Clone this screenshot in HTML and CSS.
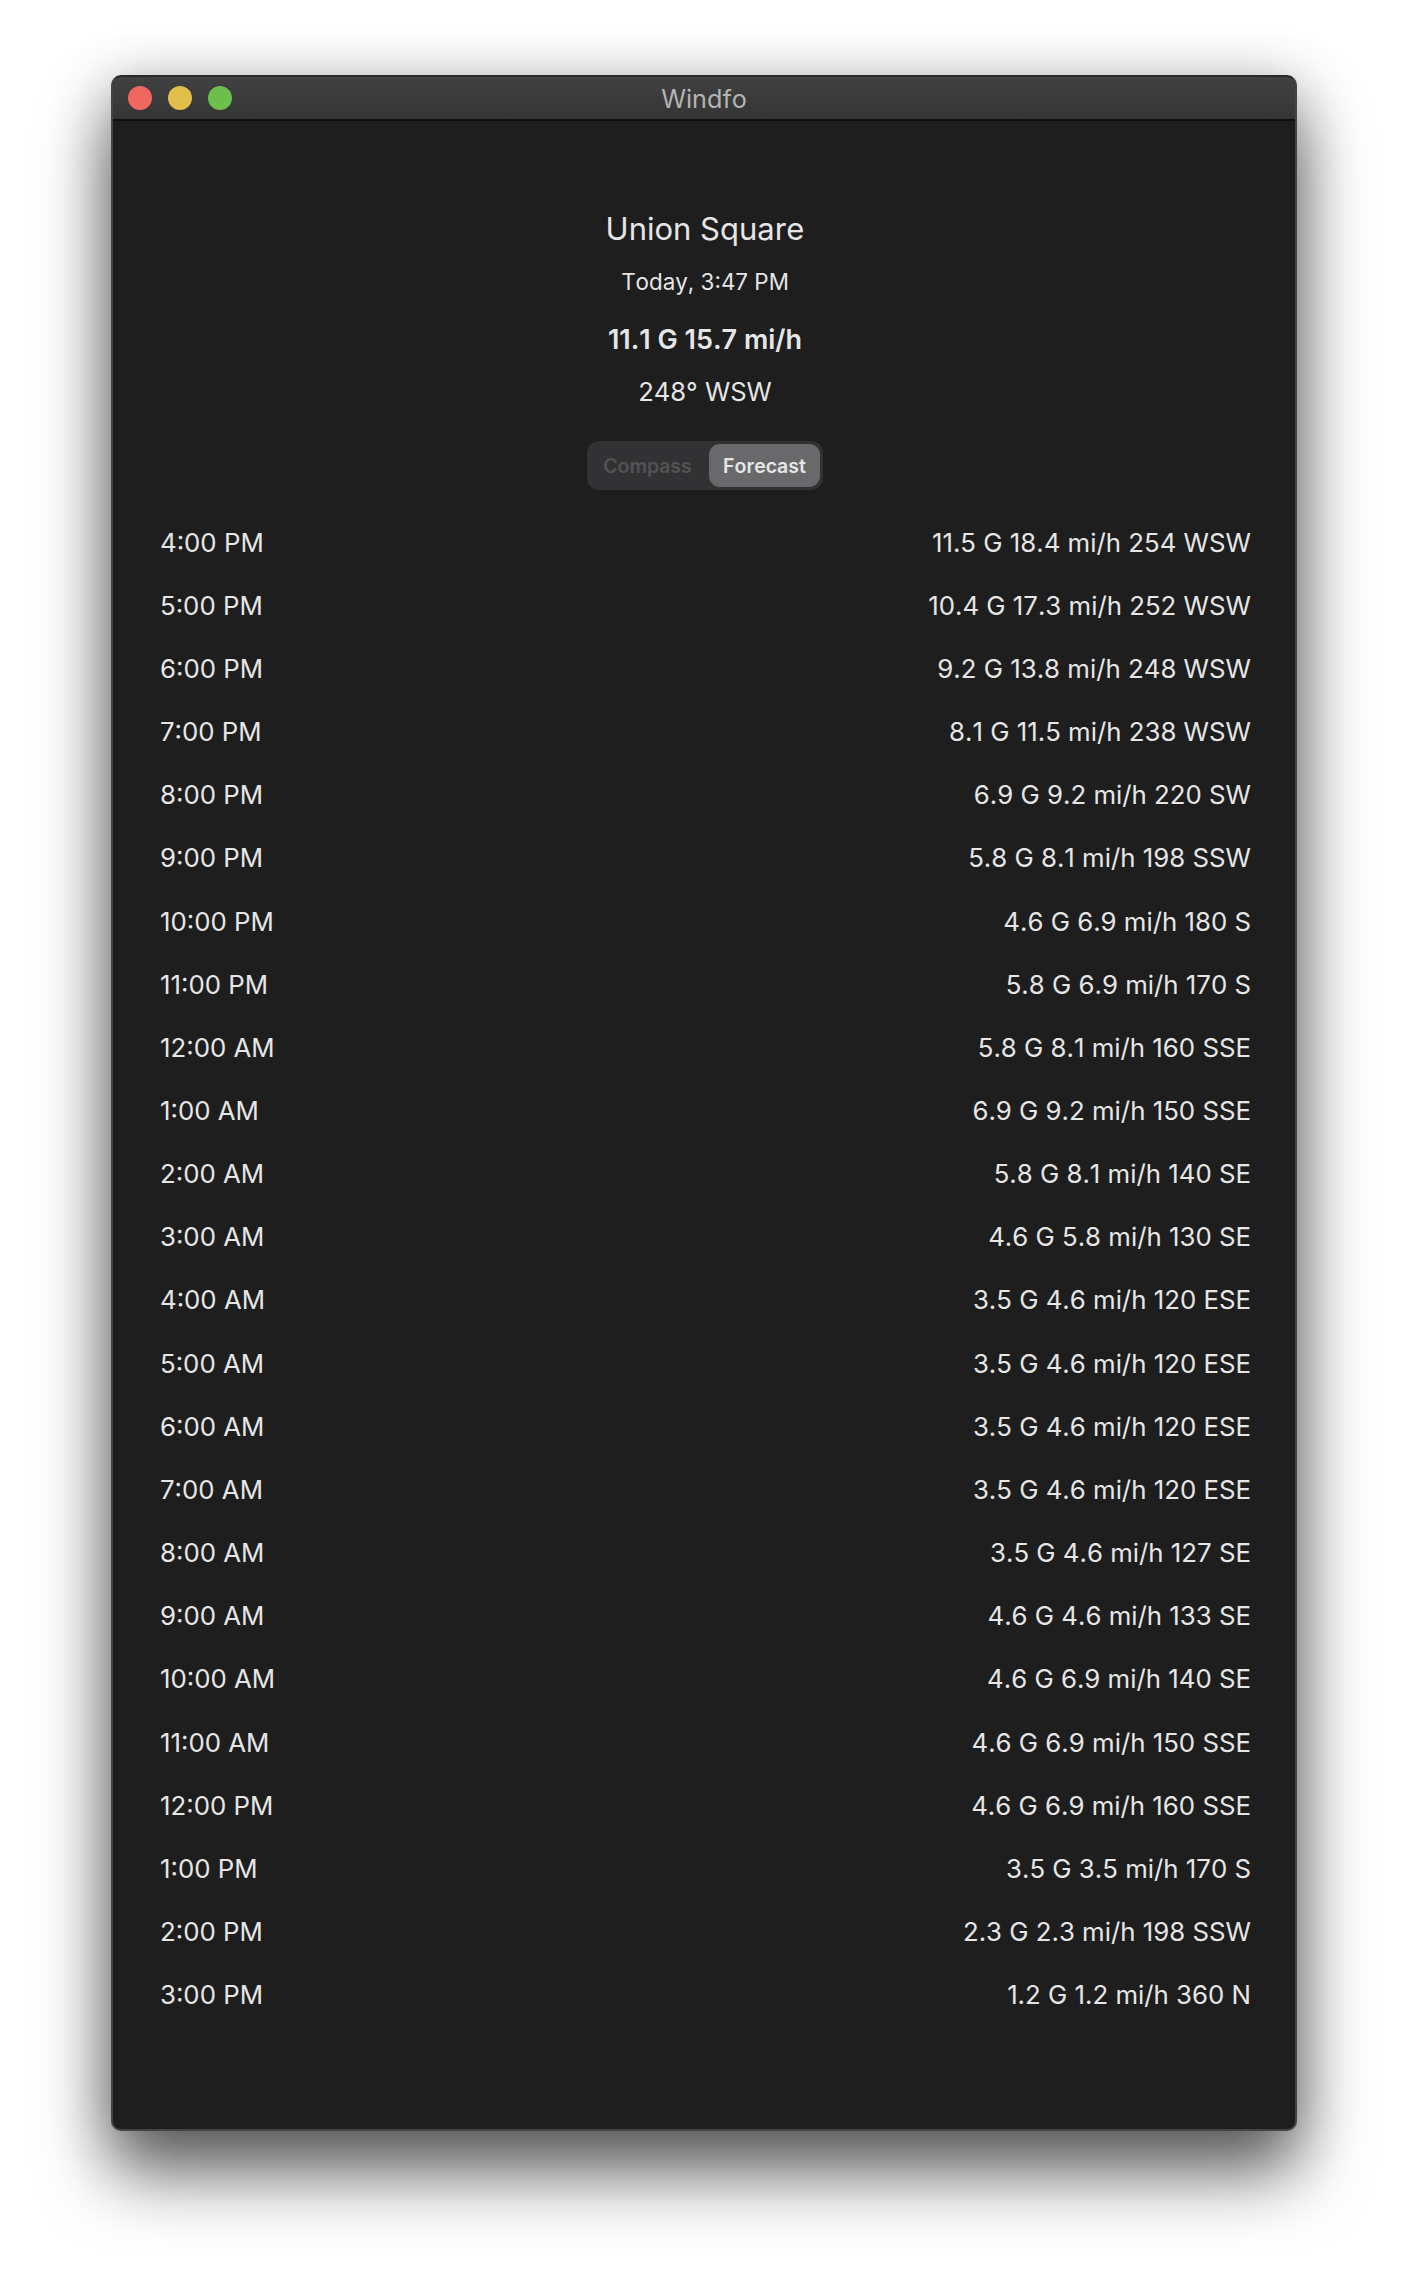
FILE: index.html
```html
<!DOCTYPE html>
<html lang="en">
<head>
<meta charset="utf-8">
<title>Windfo</title>
<link rel="stylesheet" href="styles.css">
</head>
<body>
<div class="window">
  <header class="titlebar">
    <div class="lights">
      <span class="light red"></span>
      <span class="light yellow"></span>
      <span class="light green"></span>
    </div>
    <div class="title">Windfo</div>
  </header>
  <main class="content">
    <section class="summary">
      <h1 class="station">Union Square</h1>
      <div class="updated">Today, 3:47 PM</div>
      <div class="speed">11.1 G 15.7 mi/h</div>
      <div class="direction">248° WSW</div>
      <div class="segmented">
        <span class="segment">Compass</span>
        <span class="segment active">Forecast</span>
      </div>
    </section>
    <ul class="forecast">
      <li class="row"><span>4:00 PM</span><span>11.5 G 18.4 mi/h 254 WSW</span></li>
      <li class="row"><span>5:00 PM</span><span>10.4 G 17.3 mi/h 252 WSW</span></li>
      <li class="row"><span>6:00 PM</span><span>9.2 G 13.8 mi/h 248 WSW</span></li>
      <li class="row"><span>7:00 PM</span><span>8.1 G 11.5 mi/h 238 WSW</span></li>
      <li class="row"><span>8:00 PM</span><span>6.9 G 9.2 mi/h 220 SW</span></li>
      <li class="row"><span>9:00 PM</span><span>5.8 G 8.1 mi/h 198 SSW</span></li>
      <li class="row"><span>10:00 PM</span><span>4.6 G 6.9 mi/h 180 S</span></li>
      <li class="row"><span>11:00 PM</span><span>5.8 G 6.9 mi/h 170 S</span></li>
      <li class="row"><span>12:00 AM</span><span>5.8 G 8.1 mi/h 160 SSE</span></li>
      <li class="row"><span>1:00 AM</span><span>6.9 G 9.2 mi/h 150 SSE</span></li>
      <li class="row"><span>2:00 AM</span><span>5.8 G 8.1 mi/h 140 SE</span></li>
      <li class="row"><span>3:00 AM</span><span>4.6 G 5.8 mi/h 130 SE</span></li>
      <li class="row"><span>4:00 AM</span><span>3.5 G 4.6 mi/h 120 ESE</span></li>
      <li class="row"><span>5:00 AM</span><span>3.5 G 4.6 mi/h 120 ESE</span></li>
      <li class="row"><span>6:00 AM</span><span>3.5 G 4.6 mi/h 120 ESE</span></li>
      <li class="row"><span>7:00 AM</span><span>3.5 G 4.6 mi/h 120 ESE</span></li>
      <li class="row"><span>8:00 AM</span><span>3.5 G 4.6 mi/h 127 SE</span></li>
      <li class="row"><span>9:00 AM</span><span>4.6 G 4.6 mi/h 133 SE</span></li>
      <li class="row"><span>10:00 AM</span><span>4.6 G 6.9 mi/h 140 SE</span></li>
      <li class="row"><span>11:00 AM</span><span>4.6 G 6.9 mi/h 150 SSE</span></li>
      <li class="row"><span>12:00 PM</span><span>4.6 G 6.9 mi/h 160 SSE</span></li>
      <li class="row"><span>1:00 PM</span><span>3.5 G 3.5 mi/h 170 S</span></li>
      <li class="row"><span>2:00 PM</span><span>2.3 G 2.3 mi/h 198 SSW</span></li>
      <li class="row"><span>3:00 PM</span><span>1.2 G 1.2 mi/h 360 N</span></li>
    </ul>
  </main>
</div>
</body>
</html>
```

FILE: styles.css
```css
* { box-sizing: border-box; }
html, body { margin: 0; height: 2278px; overflow: hidden; background: #fff; }
body {
  padding: 75px 111px 0 111px;
  font-family: Inter, "Liberation Sans", sans-serif;
  font-kerning: none;
  color: #e6e6e6;
}
.window {
  width: 1186px;
  height: 2056px;
  border-radius: 10px;
  background: #1e1e1e;
  border: 2px solid #444;
  border-top-color: #2a2a2a;
  box-shadow: 0 44px 70px rgba(0,0,0,.55), 0 10px 60px rgba(0,0,0,.3);
  overflow: hidden;
  display: flex;
  flex-direction: column;
}
.titlebar {
  height: 44px;
  flex: none;
  position: relative;
  display: flex;
  align-items: center;
  justify-content: center;
  background: linear-gradient(#414141, #353535);
  border-bottom: 2px solid #0e0e0e;
}
.lights {
  position: absolute;
  left: 15px;
  top: 9px;
  display: flex;
  gap: 16px;
}
.light { width: 24px; height: 24px; border-radius: 50%; }
.red { background: #ef675f; }
.yellow { background: #e2bf4b; }
.green { background: #6bbf4a; }
.title { padding-top: 1px; font-size: 25.2px; color: #b4b4b4; }
.content { flex: 1; padding: 0 44px 0 47px; display: flex; flex-direction: column; }
.summary { display: flex; flex-direction: column; align-items: center; margin-left: -1px; }
.station { margin: 88px 0 0; font-size: 31px; line-height: 40px; font-weight: 400; }
.updated { margin-top: 18px; font-size: 22.4px; line-height: 30px; }
.speed { margin-top: 27px; font-size: 27px; line-height: 32px; font-weight: 600; }
.direction { margin-top: 20px; font-size: 25.6px; line-height: 32px; }
.segmented {
  margin-top: 33px;
  width: 236px;
  height: 49px;
  padding: 3px;
  border-radius: 12px;
  background: #323234;
  display: flex;
  align-items: stretch;
  font-size: 19.5px;
  font-weight: 600;
}
.segment { display: flex; align-items: center; justify-content: center; width: 115px; color: #525254; }
.segment.active { width: 111px; margin-left: 4px; background: #69696c; border-radius: 11px; color: #e6e6e6; }
.forecast { list-style: none; margin: 20.5px 0 0; padding: 0; }
.row { height: 63.17px; display: flex; justify-content: space-between; align-items: center; font-size: 25.8px; }
```
